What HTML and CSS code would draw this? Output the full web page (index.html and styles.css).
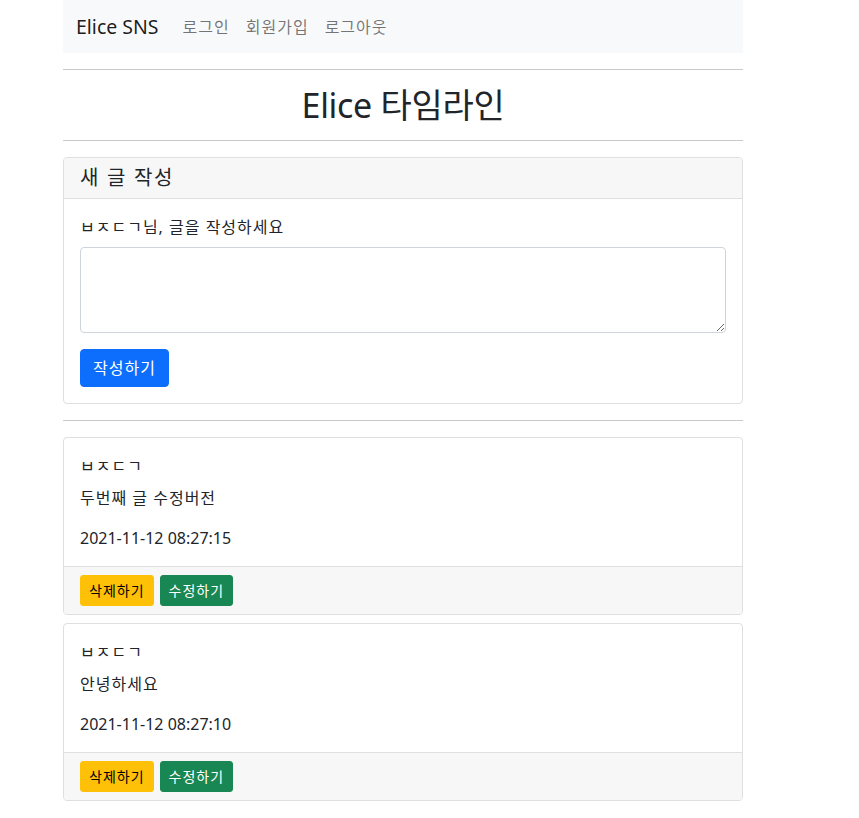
FILE: index.html
```html
<!DOCTYPE html>
<html lang="ko">
<head>
<meta charset="utf-8">
<title>Elice SNS</title>
<link rel="stylesheet" href="styles.css">
</head>
<body>
<div class="page">
  <nav class="navbar">
    <a class="brand" href="#">Elice SNS</a>
    <ul class="nav-links">
      <li><a href="#">로그인</a></li>
      <li><a href="#">회원가입</a></li>
      <li><a href="#">로그아웃</a></li>
    </ul>
  </nav>
  <hr class="rule">
  <h1 class="title">Elice 타임라인</h1>
  <hr class="rule">

  <section class="card">
    <div class="card-header"><h5 class="card-header-title">새 글 작성</h5></div>
    <div class="card-body">
      <label class="form-label" for="content">ㅂㅈㄷㄱ님, 글을 작성하세요</label>
      <textarea id="content" class="form-control"></textarea>
      <button class="btn btn-primary">작성하기</button>
    </div>
  </section>

  <hr class="rule">

  <article class="card post">
    <div class="card-body">
      <p class="post-author">ㅂㅈㄷㄱ</p>
      <p class="post-content">두번째 글 수정버전</p>
      <p class="post-date">2021-11-12 08:27:15</p>
    </div>
    <div class="card-footer">
      <button class="btn btn-sm btn-warning">삭제하기</button>
      <button class="btn btn-sm btn-success">수정하기</button>
    </div>
  </article>

  <article class="card post">
    <div class="card-body">
      <p class="post-author">ㅂㅈㄷㄱ</p>
      <p class="post-content">안녕하세요</p>
      <p class="post-date">2021-11-12 08:27:10</p>
    </div>
    <div class="card-footer">
      <button class="btn btn-sm btn-warning">삭제하기</button>
      <button class="btn btn-sm btn-success">수정하기</button>
    </div>
  </article>
</div>
</body>
</html>
```

FILE: styles.css
```css
* { box-sizing: border-box; }

html, body {
  margin: 0;
  padding: 0;
  background: #fff;
}

body {
  font-family: "Noto Sans", "Noto Sans CJK KR", sans-serif;
  font-size: 16px;
  line-height: 1.5;
  color: #212529;
  letter-spacing: 1px;
}

.page {
  width: 680px;
  margin-left: 63px;
}

.navbar {
  height: 53px;
  background: #f8f9fa;
  display: flex;
  align-items: center;
  padding: 0 13px;
}

.brand {
  font-size: 19.5px;
  letter-spacing: 0;
  color: rgba(0, 0, 0, 0.9);
  text-decoration: none;
  margin-right: 16px;
  line-height: 30px;
}

.nav-links {
  list-style: none;
  margin: 0;
  padding: 0;
  display: flex;
}

.nav-links a {
  display: block;
  padding: 8px;
  color: rgba(0, 0, 0, 0.55);
  text-decoration: none;
  font-size: 16px;
}

.rule {
  border: 0;
  border-top: 1px solid #c8c9ca;
  margin: 16px 0;
  height: 0;
}

.title {
  margin: 0;
  text-align: center;
  font-size: 34px;
  font-weight: 400;
  line-height: 38px;
  letter-spacing: -0.3px;
}

.card {
  border: 1px solid #dfdfdf;
  border-radius: 4px;
  background: #fff;
  overflow: hidden;
}

.card.post {
  margin-bottom: 8px;
}

.card-header {
  background: #f7f7f7;
  border-bottom: 1px solid #dfdfdf;
  padding: 8px 16px;
}

.card-header-title {
  margin: 0;
  font-size: 20px;
  font-weight: 400;
  line-height: 24px;
  letter-spacing: 1.7px;
}

.card-body {
  padding: 16px;
}

.form-label {
  display: block;
  margin-bottom: 8px;
}

.form-control {
  display: block;
  width: 100%;
  height: 86px;
  border: 1px solid #ced4da;
  border-radius: 4px;
  padding: 6px 12px;
  font: inherit;
  margin: 0 0 16px;
  resize: vertical;
}

.btn {
  display: inline-block;
  border: 1px solid transparent;
  border-radius: 4px;
  padding: 6px 12px;
  font-family: inherit;
  font-size: 16px;
  line-height: 24px;
  letter-spacing: 1px;
  cursor: pointer;
}

.btn-sm {
  padding: 4px 8px;
  font-size: 14px;
  line-height: 21px;
  border-radius: 3px;
}

.btn-primary { background: #0d6efd; border-color: #0d6efd; color: #fff; }
.btn-warning { background: #ffc107; border-color: #ffc107; color: #000; }
.btn-success { background: #198754; border-color: #198754; color: #fff; }

.post-author { margin: 0 0 8px; }
.post-content { margin: 0 0 16px; }
.post-date { margin: 0; letter-spacing: 0; }

.card-footer {
  background: #f7f7f7;
  border-top: 1px solid #dfdfdf;
  padding: 8px 16px;
  display: flex;
  gap: 6px;
}
```
